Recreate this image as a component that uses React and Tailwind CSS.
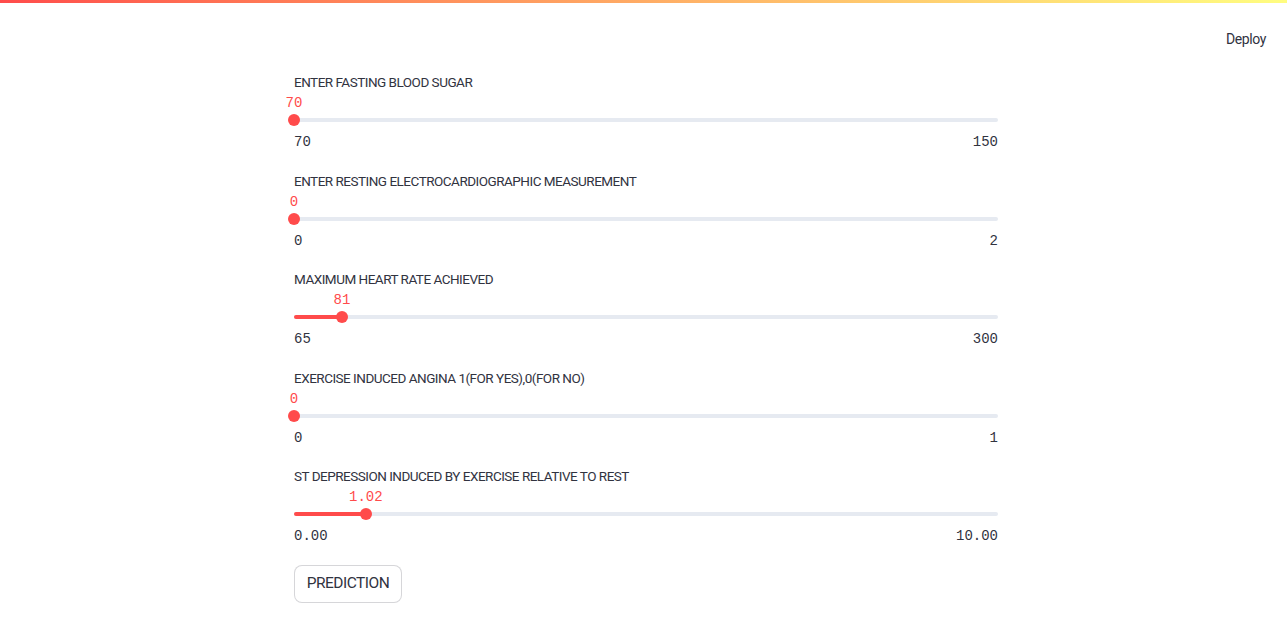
import React from 'react';

const sliders = [
  { label: 'ENTER FASTING BLOOD SUGAR', min: 70, max: 150, value: 70, fmt: (v) => String(v) },
  { label: 'ENTER RESTING ELECTROCARDIOGRAPHIC MEASUREMENT', min: 0, max: 2, value: 0, fmt: (v) => String(v) },
  { label: 'MAXIMUM HEART RATE ACHIEVED', min: 65, max: 300, value: 81, fmt: (v) => String(v) },
  { label: 'EXERCISE INDUCED ANGINA 1(FOR YES),0(FOR NO)', min: 0, max: 1, value: 0, fmt: (v) => String(v) },
  { label: 'ST DEPRESSION INDUCED BY EXERCISE RELATIVE TO REST', min: 0, max: 10, value: 1.02, fmt: (v) => v.toFixed(2) },
];

const Slider = ({ label, min, max, value, fmt }) => {
  const pct = ((value - min) / (max - min)) * 100;
  return (
    <div className="flex h-[98.5px] flex-col">
      <div className="h-5 text-[13.5px] leading-5 tracking-[-0.5px] text-[#31333f]">{label}</div>
      <div className="relative h-5">
        <span
          className="absolute top-[1px] -translate-x-1/2 font-['Liberation_Mono',monospace] text-[14px] leading-5 text-[#ff4b4b]"
          style={{ left: `${pct}%` }}
        >
          {fmt(value)}
        </span>
      </div>
      <div className="relative flex h-4 items-center">
        <div className="h-1 w-full rounded-full bg-[#e6eaf1]" />
        <div className="absolute left-0 h-1 rounded-full bg-[#ff4b4b]" style={{ width: `${pct}%` }} />
        <div
          className="absolute h-3 w-3 -translate-x-1/2 rounded-full bg-[#ff4b4b]"
          style={{ left: `${pct}%` }}
        />
      </div>
      <div className="mt-1 flex h-5 justify-between font-['Liberation_Mono',monospace] text-[14px] leading-5 text-[#31333f]">
        <span>{fmt(min)}</span>
        <span>{fmt(max)}</span>
      </div>
    </div>
  );
};

export default function App() {
  return (
    <div className="min-h-screen bg-white font-['Roboto',sans-serif] text-[#31333f]">
      <div className="h-[3px] w-full bg-gradient-to-r from-[#ff4b4b] to-[#fffd80]" />
      <div className="flex h-[69px] items-start justify-end pr-[21px] pt-[26px]">
        <span className="text-[14px] leading-5 tracking-[-0.4px]">Deploy</span>
      </div>
      <div className="flex justify-center pl-[5px]">
        <div className="w-[704px]">
          {sliders.map((s) => (
            <Slider key={s.label} {...s} />
          ))}
          <button className="h-[38px] w-[108px] rounded-lg border border-[#31333f]/20 bg-white text-[15.5px] tracking-[-0.5px] text-[#31333f]">
            PREDICTION
          </button>
        </div>
      </div>
    </div>
  );
}
